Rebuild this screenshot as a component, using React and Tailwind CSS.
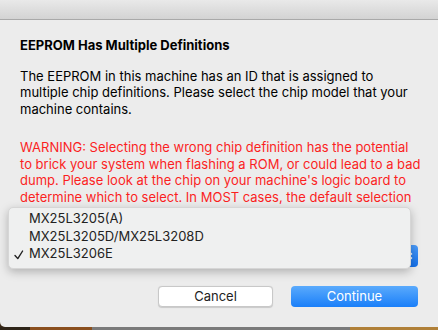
import React from 'react';

// --- Chip choices shown in the open popup menu ---
const chips = ['MX25L3205(A)', 'MX25L3205D/MX25L3208D', 'MX25L3206E'];
const selected = 'MX25L3206E';

const Check = () => (
    <svg width="10" height="10" viewBox="0 0 10 10" className="absolute left-[5px] top-[5px]">
        <path d="M1 5.5 L3.8 8.6 L8.6 1" fill="none" stroke="#222" strokeWidth="1.4" strokeLinecap="round" strokeLinejoin="round" />
    </svg>
);

const ChipMenu = () => (
    <div className="absolute left-[8px] top-[187px] w-[403px] h-[62px] rounded-[5px] bg-[#eff0f0] border border-[#d6d6d6] shadow-[0_3px_10px_rgba(0,0,0,0.25)] pt-[2px]">
        {chips.map(chip => (
            <div key={chip} className="relative h-[17.5px] leading-[17.5px] pl-[20px] text-[13px] text-[#222]">
                {chip === selected && <Check />}
                {chip}
            </div>
        ))}
    </div>
);

export default function App() {
    return (
        <div className="w-[438px] h-[330px] overflow-hidden flex flex-col bg-[#3b2a18] font-['Inter','Liberation_Sans',sans-serif]">
            <div className="flex flex-1">
                {/* desktop peeking through on the left */}
                <div className="w-[2px] bg-[linear-gradient(#c8c8c8,#8a8a8a_30%,#d0d0d0_60%,#6a5a4a)]" />

                <div className="flex-1 flex flex-col bg-[#ececec] rounded-bl-[5px]">
                    <div className="h-[20px] bg-[linear-gradient(#e9e9e9,#d3d3d3)] border-b border-[#a9a9a9]" />

                    <div className="relative flex-1 pl-[20px] pr-[18px] pt-[17px]">
                        <h2 className="text-[13px] leading-[16px] font-bold text-black">EEPROM Has Multiple Definitions</h2>

                        <p className="mt-[15px] text-[13px] leading-[16.4px] text-black whitespace-nowrap">
                            The EEPROM in this machine has an ID that is assigned to<br />
                            multiple chip definitions. Please select the chip model that your<br />
                            machine contains.
                        </p>

                        <p className="mt-[22px] text-[13px] leading-[16.6px] text-[#fb1f1f] whitespace-nowrap">
                            WARNING: Selecting the wrong chip definition has the potential<br />
                            to brick your system when flashing a ROM, or could lead to a bad<br />
                            dump. Please look at the chip on your machine's logic board to<br />
                            determine which to select. In MOST cases, the default selection
                        </p>

                        {/* popup button, mostly covered by its open menu */}
                        <div className="absolute left-[180px] top-[225px] w-[238px] h-[22px] flex rounded-[4px] bg-white border border-[#c4c4c4]">
                            <div className="flex-1" />
                            <div className="w-[17px] -my-px -mr-px rounded-r-[4px] bg-[linear-gradient(#4a9bfa,#1470ea)] flex items-center justify-center">
                                <svg width="7" height="12" viewBox="0 0 7 12">
                                    <path d="M1 4.5 L3.5 2 L6 4.5 M1 7.5 L3.5 10 L6 7.5" fill="none" stroke="white" strokeWidth="1.3" />
                                </svg>
                            </div>
                        </div>

                        <ChipMenu />

                        <div className="absolute left-[158px] top-[266px] flex gap-[18px]">
                            <button className="w-[115px] h-[21px] rounded-[4px] bg-white border border-[#c8c8c8] shadow-[0_0.5px_1px_rgba(0,0,0,0.15)] text-[13px] text-[#222]">Cancel</button>
                            <button className="w-[127px] h-[21px] rounded-[4px] bg-[linear-gradient(#5aaafc,#1a7ff9)] text-[13px] text-white">Continue</button>
                        </div>
                    </div>
                </div>
            </div>

            <div className="h-[3px] flex">
                <div className="w-[30px] bg-[#2e2418]" />
                <div className="w-[62px] bg-[#8a4f1e]" />
                <div className="w-[258px] bg-[#7a7a7a]" />
                <div className="flex-1 bg-[#b08038]" />
            </div>
        </div>
    );
}
